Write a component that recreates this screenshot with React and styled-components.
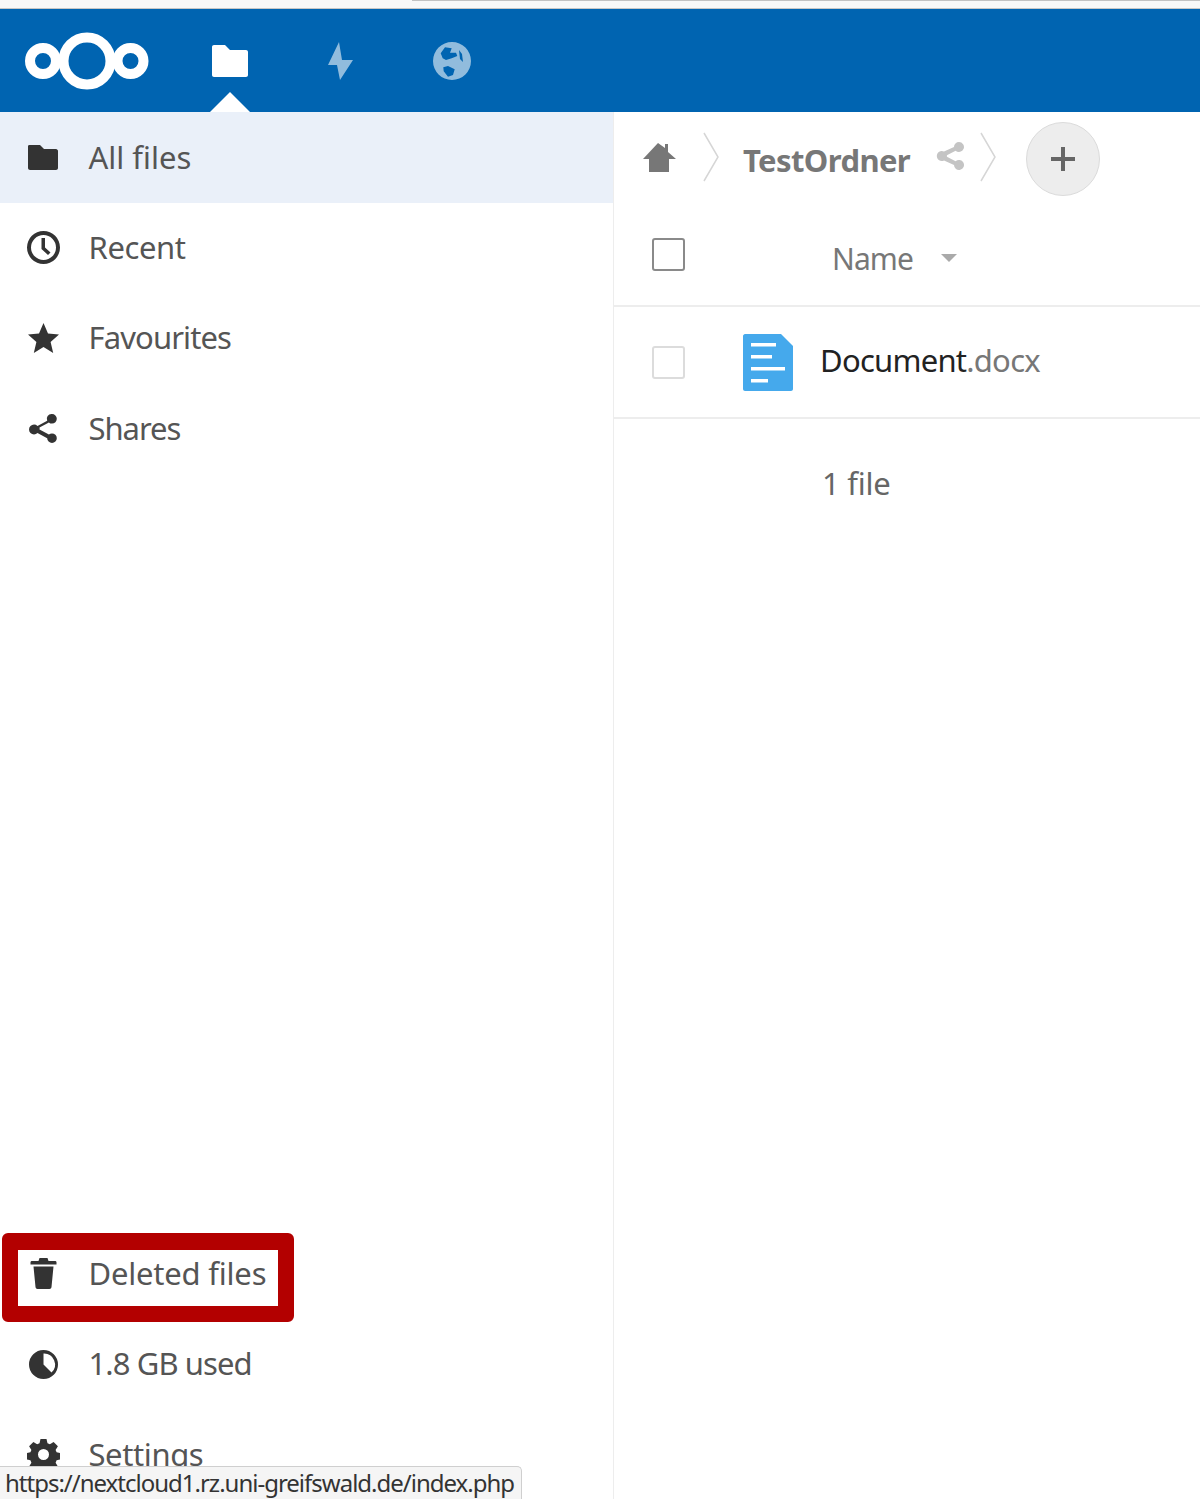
import React from "react";
import styled, { createGlobalStyle } from "styled-components";

const Global = createGlobalStyle`
  html, body { margin: 0; padding: 0; background: #fff; }
  body { font-family: "Noto Sans", "Liberation Sans", sans-serif; }
`;

const Page = styled.div`
  position: relative;
  width: 1200px;
  height: 1499px;
  overflow: hidden;
  display: flex;
  flex-direction: column;
  background: #fff;
`;
const BrowserEdge = styled.div`
  height: 8px;
  flex: none;
  background: #f8f8f8;
  border-bottom: 1px solid #c6c6c6;
`;
const TabLine = styled.div`
  height: 1px;
  margin-left: 412px;
  background: #c2c2c2;
`;
const Header = styled.header`
  height: 103px;
  flex: none;
  background: #0064b1;
  display: flex;
  align-items: center;
  padding-left: 24px;
`;
const Logo = styled.svg`
  width: 126px;
  height: 58px;
  flex: none;
  margin-right: 24px;
`;
const AppNav = styled.nav`
  display: flex;
  height: 100%;
`;
const AppIcon = styled.a`
  position: relative;
  width: 111px;
  height: 100%;
  display: flex;
  align-items: center;
  justify-content: center;
  opacity: ${(p) => (p.$active ? 1 : 0.57)};
  ${(p) =>
    p.$active &&
    `&::after {
      content: "";
      position: absolute;
      left: 36px;
      bottom: 0;
      border: 20px solid transparent;
      border-top: 0;
      border-bottom: 20px solid #fff;
    }`}
`;
const Body = styled.div`
  flex: 1;
  min-height: 0;
  display: flex;
`;
const Sidebar = styled.aside`
  width: 614px;
  flex: none;
  box-sizing: border-box;
  border-right: 1px solid #ededed;
  display: flex;
  flex-direction: column;
  justify-content: space-between;
`;
const NavGroup = styled.div`
  display: flex;
  flex-direction: column;
`;
const NavRow = styled.a`
  height: 90.5px;
  flex: none;
  display: flex;
  align-items: center;
  padding-left: 27px;
  gap: 28.5px;
  background: ${(p) => (p.$active ? "#eaf0f9" : "transparent")};
  color: #555;
  font-size: 31px;
`;
const NavLabel = styled.span`
  margin-top: -2px;
  letter-spacing: ${(p) => p.$track ?? -0.9}px;
`;
const ActiveLabel = styled(NavLabel)`
  margin-top: 0;
`;
const NavIcon = styled.svg`
  width: 33px;
  height: 33px;
  flex: none;
  fill: #333;
`;
const BottomGroup = styled(NavGroup)`
  margin-bottom: -1px;
`;
const Main = styled.main`
  flex: 1;
  min-width: 0;
  display: flex;
  flex-direction: column;
`;
const Crumbs = styled.div`
  height: 94px;
  flex: none;
  display: flex;
  align-items: center;
  padding-left: 29px;
`;
const HomeIcon = styled.svg`
  width: 34px;
  height: 32px;
  flex: none;
  fill: #777;
`;
const Chevron = styled.svg`
  width: 18px;
  height: 50px;
  flex: none;
  fill: none;
  stroke: #d6d6d6;
  stroke-width: 1.5;
  margin-left: ${(p) => p.$gap || 0}px;
  margin-top: -4px;
`;
const FolderName = styled.span`
  margin-left: 23px;
  font-size: 31px;
  font-weight: 700;
  color: #777;
  letter-spacing: -0.6px;
  margin-top: 2px;
`;
const ShareIcon = styled.svg`
  width: 30px;
  height: 32px;
  flex: none;
  fill: #c4c4c4;
  margin: -6px 13px 0 26px;
`;
const AddButton = styled.button`
  width: 74px;
  height: 74px;
  flex: none;
  margin-left: 29px;
  box-sizing: border-box;
  border-radius: 50%;
  border: 1px solid #dbdbdb;
  background: #ededed;
  padding: 0;
  display: flex;
  align-items: center;
  justify-content: center;
`;
const ListHead = styled.div`
  height: 101px;
  flex: none;
  box-sizing: border-box;
  border-bottom: 2px solid #ededed;
  display: flex;
  align-items: center;
  padding-left: 38px;
`;
const CheckBox = styled.span`
  width: 33px;
  height: 33px;
  flex: none;
  box-sizing: border-box;
  border-radius: 3px;
  background: #fff;
  border: 2px solid ${(p) => (p.$faint ? "#dcdcdc" : "#8a8a8a")};
`;
const HeadCheck = styled(CheckBox)`
  margin-top: -3px;
`;
const NameHead = styled.span`
  margin: 5px 0 0 147px;
  font-size: 30px;
  color: #777;
  letter-spacing: -0.9px;
`;
const SortArrow = styled.span`
  margin: 5px 0 0 28px;
  width: 0;
  height: 0;
  border: 8px solid transparent;
  border-bottom: 0;
  border-top: 8px solid #aaa;
`;
const FileRow = styled.div`
  height: 112px;
  flex: none;
  box-sizing: border-box;
  border-bottom: 2px solid #ededed;
  display: flex;
  align-items: center;
  padding-left: 38px;
`;
const DocIcon = styled.svg`
  width: 50px;
  height: 57px;
  flex: none;
  margin-left: 58px;
`;
const FileName = styled.span`
  margin: -4px 0 0 27px;
  font-size: 31px;
  color: #222;
  letter-spacing: -0.75px;
`;
const FileExt = styled.span`
  color: #777;
`;
const Summary = styled.div`
  padding: 43px 0 0 208px;
  font-size: 31px;
  line-height: 42px;
  color: #666;
  letter-spacing: -0.25px;
`;
const Annotation = styled.div`
  position: absolute;
  left: 2px;
  top: 1233px;
  width: 292px;
  height: 89px;
  box-sizing: border-box;
  border: 16px solid #b30000;
  border-top-width: 17px;
  border-radius: 6px;
  pointer-events: none;
`;
const StatusTip = styled.div`
  position: absolute;
  left: 0;
  bottom: 0;
  width: 522px;
  height: 33px;
  box-sizing: border-box;
  border: 1px solid #cfcfcf;
  border-bottom: 0;
  border-left: 0;
  border-top-right-radius: 5px;
  background: #f5f5f5;
  padding-left: 5px;
  font-size: 24px;
  line-height: 31px;
  color: #333;
  letter-spacing: -1px;
  white-space: nowrap;
`;

const Folder = ({ fill }) => (
  <svg width="36" height="32" viewBox="0 0 36 32" fill={fill}>
    <path d="M2 0h11l5 5h16c1.100 0 2 .9 2 2v23c0 1.100-.9 2-2 2H2c-1.100 0-2-.9-2-2V2C0 .9.900 0 2 0z" />
  </svg>
);

export default function App() {
  return (
    <Page>
      <Global />
      <BrowserEdge>
        <TabLine />
      </BrowserEdge>
      <Header>
        <Logo viewBox="0 0 126 58" fill="none" stroke="#fff">
          <circle cx="19" cy="29" r="13" strokeWidth="10" />
          <circle cx="63" cy="29" r="23.500" strokeWidth="10" />
          <circle cx="106.500" cy="29" r="13" strokeWidth="10" />
        </Logo>
        <AppNav>
          <AppIcon $active>
            <Folder fill="#fff" />
          </AppIcon>
          <AppIcon>
            <svg width="28" height="40" viewBox="0 0 28 40" fill="#fff">
              <path d="M12 1 1 24h9l3 15L26 19H15z" />
            </svg>
          </AppIcon>
          <AppIcon>
            <svg width="38" height="38" viewBox="0 0 38 38" fill="#fff">
              <path
                fillRule="evenodd"
                d="M19 0a19 19 0 1 0 0 38 19 19 0 0 0 0-38zM7.700 11.300 12 5.300l6.700 1-1.700 4.400 6 0 1.300 3.300-5.600 2.300-5.700 1.700-3.300-1.700zM10.300 25.300 15 24l6.700 3.300-1.700 5.700-5 1.700-4.300-5.400zM26 8l3 4 1 8-3-3z"
              />
            </svg>
          </AppIcon>
        </AppNav>
      </Header>
      <Body>
        <Sidebar>
          <NavGroup>
            <NavRow $active>
              <NavIcon viewBox="0 0 33 33">
                <path d="M3 4h10l4 4h12c1 0 2 1 2 2v17c0 1-1 2-2 2H3c-1 0-2-1-2-2V5c0-1 1-1 2-1z" />
              </NavIcon>
              <ActiveLabel $track={0}>All files</ActiveLabel>
            </NavRow>
            <NavRow>
              <NavIcon viewBox="0 0 33 33">
                <path
                  fillRule="evenodd"
                  d="M16.500 0a16.500 16.500 0 1 1 0 33 16.500 16.500 0 0 1 0-33zm0 4a12.500 12.500 0 1 0 0 25 12.500 12.500 0 0 0 0-25zM14.500 7h3.500v9.500l5.500 5-2.500 2.500-6.500-6z"
                />
              </NavIcon>
              <NavLabel $track={-0.4}>Recent</NavLabel>
            </NavRow>
            <NavRow>
              <NavIcon viewBox="0 0 33 33">
                <path d="M16.500 1l4.500 10.500 11 1-8.400 7.400 2.600 11.100-9.700-6-9.700 6 2.600-11.100L1 12.500l11-1z" />
              </NavIcon>
              <NavLabel>Favourites</NavLabel>
            </NavRow>
            <NavRow>
              <NavIcon viewBox="0 0 33 33">
                <path d="M25 2a4.800 4.800 0 0 1 0 9.600c-1.200 0-2.300-.4-3.100-1.200l-9.400 5a5 5 0 0 1 0 2.200l9.400 5c.8-.8 1.900-1.200 3.100-1.200a4.800 4.800 0 1 1-4.800 4.800l-9.700-5.100a5 5 0 1 1 0-7.200l9.700-5.100A4.800 4.800 0 0 1 25 2z" />
              </NavIcon>
              <NavLabel $track={-1.05}>Shares</NavLabel>
            </NavRow>
          </NavGroup>
          <BottomGroup>
            <NavRow>
              <NavIcon viewBox="0 0 33 33">
                <path d="M12.500 1h8l1 3h6.500c1 0 1.500.5 1.500 1.500V7.500h-26V5.500C3.500 4.500 4 4 5 4h6.500zM6.500 9.500h20l-2 20.500c-.1 1-1 2-2 2H10.500c-1 0-1.900-1-2-2z" />
              </NavIcon>
              <NavLabel $track={-0.2}>Deleted files</NavLabel>
            </NavRow>
            <NavRow>
              <NavIcon viewBox="0 0 33 33">
                <path
                  fillRule="evenodd"
                  d="M16.500 2a14.500 14.500 0 1 1 0 29 14.500 14.500 0 0 1 0-29zm0 3.500V16.500l8 8a11 11 0 0 0-8-19z"
                />
              </NavIcon>
              <NavLabel>1.8 GB used</NavLabel>
            </NavRow>
            <NavRow>
              <NavIcon viewBox="0 0 33 33">
                <path
                  fillRule="evenodd"
                  d="M13.500 1h6l1 4.200 2.400 1 3.700-2.300 4.300 4.300-2.300 3.700 1 2.400 4.200 1v6l-4.200 1-1 2.400 2.300 3.700-4.300 4.300-3.700-2.300-2.400 1-1 4.200h-6l-1-4.200-2.400-1-3.700 2.300-4.300-4.300 2.300-3.700-1-2.400-4.200-1v-6l4.200-1 1-2.400-2.300-3.700 4.300-4.300 3.700 2.300 2.400-1zm3 10a5.500 5.500 0 1 0 0 11 5.500 5.500 0 0 0 0-11z"
                />
              </NavIcon>
              <NavLabel $track={-0.4}>Settings</NavLabel>
            </NavRow>
          </BottomGroup>
        </Sidebar>
        <Main>
          <Crumbs>
            <HomeIcon viewBox="0 0 34 32">
              <path d="M15 0l7 5V1h3v8l8 7h-7v13H6V16H0z" />
            </HomeIcon>
            <Chevron viewBox="0 0 18 50" $gap={25}>
              <path d="M2 1l14 24L2 49" />
            </Chevron>
            <FolderName>TestOrdner</FolderName>
            <ShareIcon viewBox="0 0 30 32">
              <path d="M23 2a5 5 0 1 1-3.400 8.700l-8.700 4.600a5 5 0 0 1 0 1.400l8.700 4.600A5 5 0 1 1 18 25l-10-4.500a5 5 0 1 1 0-9L18 7a5 5 0 0 1 5-5z" />
            </ShareIcon>
            <Chevron viewBox="0 0 18 50">
              <path d="M2 1l14 24L2 49" />
            </Chevron>
            <AddButton aria-label="New">
              <svg width="26" height="26" viewBox="0 0 26 26" fill="#666">
                <path d="M11 1h4v10h10v4H15v10h-4V15H1v-4h10z" />
              </svg>
            </AddButton>
          </Crumbs>
          <ListHead>
            <HeadCheck />
            <NameHead>Name</NameHead>
            <SortArrow />
          </ListHead>
          <FileRow>
            <CheckBox $faint />
            <DocIcon viewBox="0 0 50 57">
              <path fill="#45a9ec" d="M2 0h36l12 12v43c0 1-1 2-2 2H2c-1 0-2-1-2-2V2C0 1 1 0 2 0z" />
              <path fill="#fff" d="M8 9h25v3.500H8zM8 21h21v3.500H8zM8 33h34v3.500H8zM8 45h17v3.500H8z" />
            </DocIcon>
            <FileName>
              Document<FileExt>.docx</FileExt>
            </FileName>
          </FileRow>
          <Summary>1 file</Summary>
        </Main>
      </Body>
      <Annotation />
      <StatusTip>https://nextcloud1.rz.uni-greifswald.de/index.php</StatusTip>
    </Page>
  );
}
